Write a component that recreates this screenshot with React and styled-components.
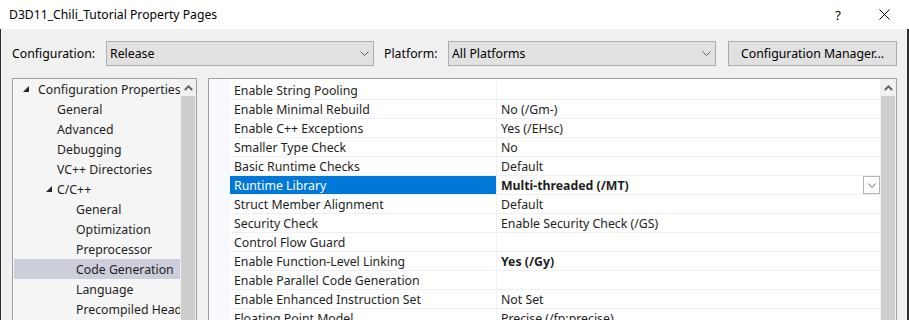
import React from "react";
import styled, { createGlobalStyle } from "styled-components";

const GlobalStyle = createGlobalStyle`
  html, body { margin: 0; padding: 0; background: #f0f0f0; }
  body {
    font-family: "Noto Sans", "Liberation Sans", sans-serif;
    font-size: 12.3px;
    color: #1e1e1e;
  }
  * { box-sizing: border-box; }
`;

const Window = styled.div`
  width: 909px;
  height: 320px;
  display: flex;
  flex-direction: column;
  overflow: hidden;
  background: #f0f0f0;
`;

const TitleBar = styled.div`
  height: 29px;
  flex-shrink: 0;
  display: flex;
  align-items: center;
  background: #ffffff;
  padding: 0 2px 0 9px;
`;

const Title = styled.div`
  flex: 1;
  font-size: 12.2px;
  color: #000;
  white-space: nowrap;
`;

const CaptionButton = styled.div`
  width: 46px;
  height: 29px;
  display: flex;
  align-items: center;
  justify-content: center;
  font-size: 13px;
  color: #000;
`;

const Body = styled.div`
  flex: 1;
  min-height: 0;
  display: flex;
  flex-direction: column;
  border-left: 1px solid #2e2e2e;
  border-right: 2px solid #2e2e2e;
`;

const ConfigRow = styled.div`
  display: flex;
  align-items: center;
  padding: 12px 10px 0 11px;
  flex-shrink: 0;
`;

const FieldLabel = styled.div`
  width: ${(p) => p.$width}px;
  flex-shrink: 0;
  color: #000;
  white-space: nowrap;
`;

const Select = styled.div`
  width: 268px;
  height: 25px;
  flex-shrink: 0;
  border: 1px solid #adadad;
  background: #e1e1e1;
  display: flex;
  align-items: center;
  justify-content: space-between;
  padding: 0 4px 0 3px;
  margin-right: ${(p) => p.$gap || 0}px;
  color: #000;
`;

const Button = styled.button`
  flex: 1;
  height: 25px;
  margin-left: 12px;
  margin-top: -1px;
  border: 1px solid #adadad;
  background: #e1e1e1;
  font: inherit;
  color: #000;
  padding: 0;
`;

const Panels = styled.div`
  flex: 1;
  min-height: 0;
  display: flex;
  gap: 11px;
  padding: 12px 10px 0 11px;
`;

const TreePanel = styled.div`
  width: 185px;
  flex-shrink: 0;
  display: flex;
  border: 1px solid #a0a0a0;
  border-bottom: none;
  background: #f5f5f5;
  overflow: hidden;
`;

const TreeList = styled.div`
  flex: 1;
  min-width: 0;
  display: flex;
  flex-direction: column;
  padding-left: 1px;
`;

const TreeRow = styled.div`
  height: 20px;
  flex-shrink: 0;
  display: flex;
  align-items: center;
  padding-left: ${(p) => 5 + p.$level * 19}px;
  background: ${(p) => (p.$selected ? "#cccedb" : "transparent")};
  white-space: nowrap;
  overflow: hidden;
`;

const Expander = styled.div`
  width: 19px;
  flex-shrink: 0;
  display: flex;
  align-items: center;
  padding-left: ${(p) => (p.$level === 0 ? 4 : 8)}px;
`;

const Scrollbar = styled.div`
  width: 16px;
  flex-shrink: 0;
  display: flex;
  flex-direction: column;
  background: #f0f0f0;
`;

const ScrollArrow = styled.div`
  height: 17px;
  flex-shrink: 0;
  display: flex;
  align-items: center;
  justify-content: center;
`;

const ScrollThumb = styled.div`
  flex: 1;
  margin: 0 1px;
  background: #cdcdcd;
`;

const GridPanel = styled.div`
  flex: 1;
  min-width: 0;
  display: flex;
  border: 1px solid #a0a0a0;
  border-bottom: none;
  background: #ffffff;
  overflow: hidden;
`;

const Strip = styled.div`
  width: 21px;
  flex-shrink: 0;
  background: #f7f9fc;
`;

const Table = styled.div`
  flex: 1;
  min-width: 0;
  display: flex;
  flex-direction: column;
  padding-top: 2px;
`;

const Row = styled.div`
  height: 19px;
  flex-shrink: 0;
  display: grid;
  grid-template-columns: 267px 1fr;
  border-bottom: 1px solid #edf0f5;
`;

const NameCell = styled.div`
  display: flex;
  align-items: center;
  padding-left: 4px;
  border-right: 1px solid #edf0f5;
  background: ${(p) => (p.$selected ? "#0078d7" : "transparent")};
  color: ${(p) => (p.$selected ? "#ffffff" : "#1e1e1e")};
  white-space: nowrap;
  overflow: hidden;
`;

const ValueCell = styled.div`
  display: flex;
  align-items: center;
  justify-content: space-between;
  padding-left: 4px;
  font-weight: ${(p) => (p.$bold ? 700 : 400)};
  white-space: nowrap;
  overflow: hidden;
`;

const ValueDrop = styled.div`
  width: 17px;
  height: 18px;
  flex-shrink: 0;
  border: 1px solid #b4b4b4;
  background: #ffffff;
  display: flex;
  align-items: center;
  justify-content: center;
`;

const Chevron = ({ w = 8, h = 4, color = "#606060" }) => (
  <svg width={w + 1} height={h + 1} viewBox={`-0.5 -0.5 ${w + 1} ${h + 1}`}>
    <polyline points={`0,0 ${w / 2},${h} ${w},0`} fill="none" stroke={color} strokeWidth="1" />
  </svg>
);

const UpArrow = () => (
  <svg width="9" height="6" viewBox="0 0 9 6">
    <polyline points="0.8,5 4.5,1.3 8.2,5" fill="none" stroke="#606060" strokeWidth="1.8" />
  </svg>
);

const Triangle = () => (
  <svg width="6" height="6" viewBox="0 0 6 6">
    <polygon points="6,0 6,6 0,6" fill="#262626" />
  </svg>
);

const CloseGlyph = () => (
  <svg width="11" height="11" viewBox="0 0 11 11">
    <path d="M0.5 0.5 L10.5 10.5 M10.5 0.5 L0.5 10.5" stroke="#000" strokeWidth="1" fill="none" />
  </svg>
);

const treeItems = [
  { label: "Configuration Properties", level: 0, expanded: true },
  { label: "General", level: 1 },
  { label: "Advanced", level: 1 },
  { label: "Debugging", level: 1 },
  { label: "VC++ Directories", level: 1 },
  { label: "C/C++", level: 1, expanded: true },
  { label: "General", level: 2 },
  { label: "Optimization", level: 2 },
  { label: "Preprocessor", level: 2 },
  { label: "Code Generation", level: 2, selected: true },
  { label: "Language", level: 2 },
  { label: "Precompiled Headers", level: 2 },
  { label: "Output Files", level: 2 },
];

const props = [
  { name: "Enable String Pooling", value: "" },
  { name: "Enable Minimal Rebuild", value: "No (/Gm-)" },
  { name: "Enable C++ Exceptions", value: "Yes (/EHsc)" },
  { name: "Smaller Type Check", value: "No" },
  { name: "Basic Runtime Checks", value: "Default" },
  { name: "Runtime Library", value: "Multi-threaded (/MT)", bold: true, selected: true },
  { name: "Struct Member Alignment", value: "Default" },
  { name: "Security Check", value: "Enable Security Check (/GS)" },
  { name: "Control Flow Guard", value: "" },
  { name: "Enable Function-Level Linking", value: "Yes (/Gy)", bold: true },
  { name: "Enable Parallel Code Generation", value: "" },
  { name: "Enable Enhanced Instruction Set", value: "Not Set" },
  { name: "Floating Point Model", value: "Precise (/fp:precise)" },
  { name: "Enable Floating Point Exceptions", value: "" },
];

export default function App() {
  return (
    <>
      <GlobalStyle />
      <Window>
        <TitleBar>
          <Title>D3D11_Chili_Tutorial Property Pages</Title>
          <CaptionButton>?</CaptionButton>
          <CaptionButton>
            <CloseGlyph />
          </CaptionButton>
        </TitleBar>
        <Body>
          <ConfigRow>
            <FieldLabel $width={94}>Configuration:</FieldLabel>
            <Select $gap={10}>
              <span>Release</span>
              <Chevron />
            </Select>
            <FieldLabel $width={64}>Platform:</FieldLabel>
            <Select>
              <span>All Platforms</span>
              <Chevron />
            </Select>
            <Button>Configuration Manager...</Button>
          </ConfigRow>
          <Panels>
            <TreePanel>
              <TreeList>
                {treeItems.map((t, i) => (
                  <TreeRow key={i} $level={t.level} $selected={t.selected}>
                    <Expander $level={t.level}>{t.expanded ? <Triangle /> : null}</Expander>
                    <span>{t.label}</span>
                  </TreeRow>
                ))}
              </TreeList>
              <Scrollbar>
                <ScrollArrow>
                  <UpArrow />
                </ScrollArrow>
                <ScrollThumb />
              </Scrollbar>
            </TreePanel>
            <GridPanel>
              <Strip />
              <Table>
                {props.map((p, i) => (
                  <Row key={i}>
                    <NameCell $selected={p.selected}>{p.name}</NameCell>
                    <ValueCell $bold={p.bold}>
                      <span>{p.value}</span>
                      {p.selected ? (
                        <ValueDrop>
                          <Chevron w={7} h={4} color="#707070" />
                        </ValueDrop>
                      ) : null}
                    </ValueCell>
                  </Row>
                ))}
              </Table>
              <Scrollbar>
                <ScrollArrow>
                  <UpArrow />
                </ScrollArrow>
                <ScrollThumb />
              </Scrollbar>
            </GridPanel>
          </Panels>
        </Body>
      </Window>
    </>
  );
}
